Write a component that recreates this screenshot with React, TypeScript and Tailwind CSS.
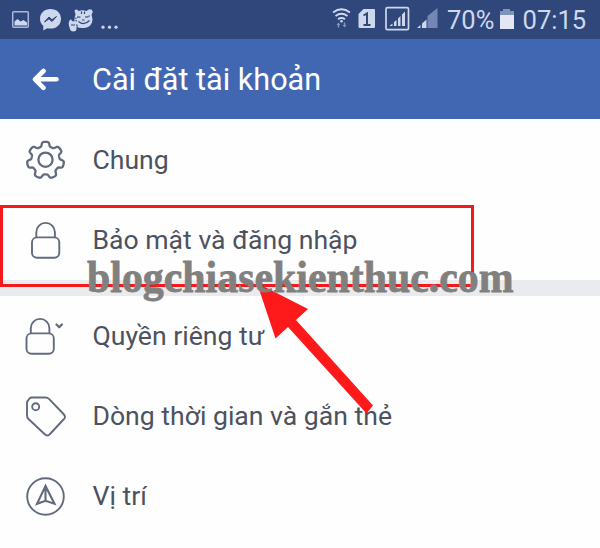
import type { ReactNode } from "react";

function Gear() {
  const pts: string[] = [];
  for (let i = 0; i < 210; i++) {
    const t = (i * 2 * Math.PI) / 210;
    const r = 16.3 + 2.2 * Math.tanh(2.4 * Math.cos(7 * t) + 0.2);
    pts.push(`${(20.5 + r * Math.sin(t)).toFixed(2)},${(20.3 - r * Math.cos(t)).toFixed(2)}`);
  }
  return (
    <>
      <polygon points={pts.join(" ")} strokeWidth="2.3" />
      <circle cx="20.5" cy="19.7" r="7.1" strokeWidth="2.3" />
    </>
  );
}

function Lock({ x = 0 }: { x?: number }) {
  return (
    <g transform={`translate(${x} 0)`}>
      <rect x="7" y="17.4" width="27.3" height="20.3" rx="5" />
      <path d="M11.300 17V12.200a9.300 9.300 0 0 1 18.600 0V17" />
    </g>
  );
}

function Row({ icon, label }: { icon: ReactNode; label: string }) {
  return (
    <div className="flex h-20 items-center pl-[25px]">
      <svg
        className="h-10 w-10 shrink-0 overflow-visible"
        viewBox="0 0 40 40"
        fill="none"
        stroke="#626b7d"
        strokeWidth="1.9"
        strokeLinejoin="round"
        strokeLinecap="round"
      >
        {icon}
      </svg>
      <span className="ml-[27.5px] text-[26.6px] leading-8 whitespace-nowrap text-[#4c5260]">{label}</span>
    </div>
  );
}

function StatusBar() {
  return (
    <div className="flex h-[39px] items-center bg-[#2f477a] text-[#cdd8ef]">
      <svg className="h-[39px] w-[130px] shrink-0" viewBox="0 0 130 39" fill="#cdd8ef">
        <rect x="12.7" y="11.7" width="15.6" height="15.6" rx="1" fill="none" stroke="#aab9da" strokeWidth="1.5" />
        <path d="M14.500 25.500v-4l3-2.500 3 2.500 3-1.500 3.500 2.500v3z" />
        <path d="M50.500 9C44.500 9 40 13 40 18.700c0 3.100 1.300 5.400 3.300 7.100v4.700l4-2.300c1 .3 2.100.4 3.200.4C56.700 28.600 61 24.400 61 18.700S56.700 9 50.500 9z" />
        <path d="M44.500 22l4.500-5 3 2.700 4.500-3.200-4.500 5-3-2.700z" fill="#2f477a" stroke="#2f477a" />
        <path d="M74.500 10.500q2-2 4 0.500 4-1.500 8 0 3-3 5.500-1 1.500 2-.5 4.500 1.500 4 .5 8-2 5-8 5.500-5 .5-7.500-1.500v3q-.5 2-3 2-3 0-3.500-2.500l-1-3q-1-3 .5-5.500 1.500-2 2.500.5l2.500.5q-.5-4 1-7z" />
        <path d="M77 17.200l3.500-.2M85 17l3.500-.2M78.500 21.500q5.500 4.500 11-1M82 20h2.500M81.500 11.500v2.500m3-2.500v2.500M74.500 18l2 .5m-1 2l1.500.3M71 25h4M90 16h-1.500M76.500 24.500l1 2" fill="none" stroke="#2f477a" strokeWidth="1.200" />
        <circle cx="103" cy="27.200" r="1.600" />
        <circle cx="109.500" cy="27.200" r="1.600" />
        <circle cx="116" cy="27.200" r="1.600" />
      </svg>
      <svg className="ml-[200px] h-[39px] w-[112px] shrink-0" viewBox="330 0 112 39" fill="#cdd8ef">
        <g fill="none" stroke="#cdd8ef" strokeWidth="1.800">
          <path d="M333 12.500q8.500-6.500 17 0M335.500 16q6-4.500 12 0M338 19.300q3.500-2.600 7 0" />
        </g>
        <circle cx="341.500" cy="21.300" r="1.300" />
        <path d="M338.500 22.500l2 2.500h-1.300v2.500h-1.500V25h-1.300zM344.500 27.500l-2-2.500h1.300v-2.500h1.500V25h1.300z" fill="#8296c0" />
        <path d="M363.500 9H374q1 0 1 1v17q0 1-1 1h-14.500q-1 0-1-1V14z" />
        <path d="M363.500 15.500l3.500-2v11.500m-3.500 0h7" fill="none" stroke="#2f477a" strokeWidth="2" />
        <rect x="386" y="7.700" width="22.500" height="22" rx="1.500" fill="none" stroke="#cdd8ef" strokeWidth="1.700" />
        <path d="M390 25.500l2.500-2v2.500H390zM394 22l2.500-2v6H394zM398 18.500l2.500-2.500v10H398zM402 14.500l3-3V26h-3z" />
        <path d="M427.500 16l10-8v20h-10z" fill="#7487b4" />
        <path d="M417 28l3.500-3v3zM422 23.500l4.500-4V28H422z" />
      </svg>
      <span className="mt-0.5 ml-[5px] w-[47px] text-[25.500px] leading-none whitespace-nowrap">70%</span>
      <svg className="mt-[-2px] ml-[5.500px] h-5 w-3.5 shrink-0" viewBox="0 0 14 20">
        <path d="M0 2h3V0h7v2h4v6H0z" fill="#8193bb" />
        <path d="M0 6h14v14H0z" fill="#e2e7f3" />
      </svg>
      <span className="mt-0.5 ml-[9px] text-[25.600px] leading-none whitespace-nowrap">07:15</span>
    </div>
  );
}

export default function App() {
  return (
    <main className="relative h-[548px] w-[600px] overflow-hidden bg-[#fefefe] font-[Roboto,sans-serif]">
      <StatusBar />
      <header className="flex h-20 items-center bg-[#4267b2] pl-[31px] text-white">
        <svg className="h-6 w-7" viewBox="0 0 28 24" fill="none" stroke="white" strokeWidth="4.600" strokeLinecap="round" strokeLinejoin="round">
          <path d="M25.500 12.300H4M12.500 4L4 12.300l8.500 8.500" />
        </svg>
        <h1 className="mt-0.5 ml-[33px] text-[30.600px] leading-9 font-normal whitespace-nowrap">Cài đặt tài khoản</h1>
      </header>
      <div className="h-px" />
      <Row label="Chung" icon={<Gear />} />
      <Row label="Bảo mật và đăng nhập" icon={<Lock />} />
      <div className="h-4 bg-[#e9ebee]" />
      <Row
        label="Quyền riêng tư"
        icon={
          <>
            <Lock x={-5.500} />
            <path d="M31.500 8.500l2.700 2.700 2.700-2.700" strokeWidth="2.300" />
          </>
        }
      />
      <Row
        label="Dòng thời gian và gắn thẻ"
        icon={
          <>
            <path d="M6.500 1.500h14q2 0 3.500 1.400L38.500 18q3 3 0 5.500L25 38q-2.500 3-5.500 0L3.500 23Q2 21.500 2 19.500V6.500q0-1 1-2L4.500 2.500Q5.500 1.500 6.500 1.500z" />
            <circle cx="10.700" cy="10.700" r="3.500" />
          </>
        }
      />
      <Row
        label="Vị trí"
        icon={
          <>
            <circle cx="20.500" cy="20.500" r="18.300" />
            <path d="M20.500 10L12 27.800l8.500-3 9 3zM20.500 10v14.500" strokeWidth="2.100" strokeLinejoin="miter" />
          </>
        }
      />
      <div className="absolute top-[205px] left-0 h-[82px] w-[474px] border-3 border-[#f31a1c]" />
      <svg className="absolute inset-0 h-full w-full" viewBox="0 0 600 548">
        <polygon points="257,283 308,309 296,320 373,405.500 366.500,413.500 288,327 275.500,338.500" fill="#fe1a1b" />
      </svg>
      <div className="absolute top-[250px] left-[87px] origin-left scale-x-[0.93] font-['Liberation_Serif',serif] text-[45px] leading-[54px] font-bold whitespace-nowrap text-[#81807f] [-webkit-text-stroke:0.8px_#81807f]">
        blogchiasekienthuc.com
      </div>
    </main>
  );
}
